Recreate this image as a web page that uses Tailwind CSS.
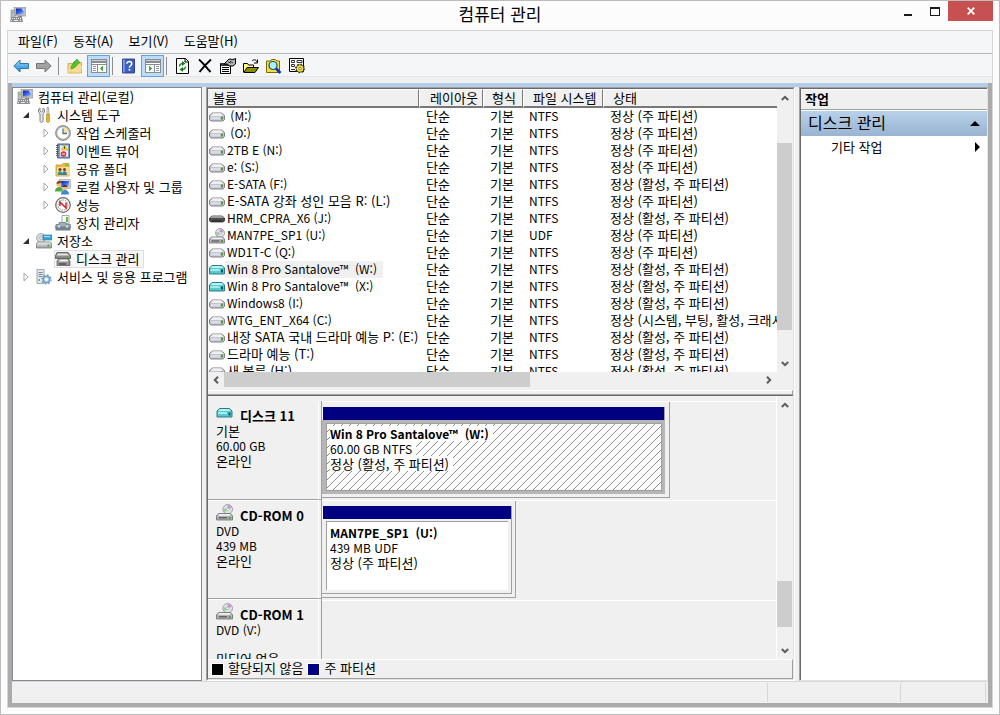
<!DOCTYPE html>
<html lang="ko">
<head>
<meta charset="utf-8">
<meta name="viewport" content="width=device-width, initial-scale=1">
<title>컴퓨터 관리</title>
<script src="https://cdn.jsdelivr.net/npm/@tailwindcss/browser@4"></script>
</head>
<body class="flex h-screen flex-col overflow-hidden border border-[#bdbdbd] bg-[#fcfcfc] px-[6px] pb-[6px] font-['Noto_Sans_CJK_KR',sans-serif] text-[13px] leading-[15px] text-black">

<svg class="absolute size-0" aria-hidden="true">
  <defs>
    <linearGradient id="gBlue" x1="0" y1="0" x2="1" y2="1"><stop offset="0" stop-color="#0a1fb0"/><stop offset=".5" stop-color="#3a62e8"/><stop offset="1" stop-color="#b8d4ff"/></linearGradient>
    <linearGradient id="gArrow" x1="0" y1="0" x2="0" y2="1"><stop offset="0" stop-color="#9fdcf8"/><stop offset="1" stop-color="#1583d6"/></linearGradient>
    <linearGradient id="gMetal" x1="0" y1="0" x2="0" y2="1"><stop offset="0" stop-color="#f4f4f4"/><stop offset="1" stop-color="#9a9aa0"/></linearGradient>
    <symbol id="computer" viewBox="0 0 16 16">
      <path d="M4 0h12v9H5z" fill="#c9c4b2" stroke="#8b8878" stroke-width=".6"/><path d="M6 1.500h8.500v6H6z" fill="url(#gBlue)"/><path d="M11.500 1.500h3v4z" fill="#c8dcff"/>
      <path d="M1 3h4v8H1z" fill="#b9bcc0" stroke="#777b80" stroke-width=".5"/><path d="M2 5h2v1H2z" fill="#5fd22e"/>
      <path d="M8 9h4v2H8z" fill="#88867c"/><path d="M1 10h11l1 5H0z" fill="#8b8f92"/><path d="M2 11h1v1H2zM4 11h1v1H4zM6 11h1v1H6zM8 11h1v1H8zM10 11h1v1h-1zM1 13h1v1H1zM4 13h4v1H4zM10 13h1v1h-1z" fill="#eceff0"/>
    </symbol>
    <symbol id="tools" viewBox="0 0 16 16">
      <path d="M4 1v3l1.500 1L7 4V1l1.500 1.500V5L7 7v7.500l-1.500 1L4 14.500V7L2.500 5V2.500z" fill="#e8e8e8" stroke="#777" stroke-width=".9"/>
      <path d="M11 .5h1.500l.5 7h-2z" fill="#e9e9e9" stroke="#777" stroke-width=".6"/><path d="M10.500 7.500h3v3h-1v1h1v3l-1 1h-1l-1-1v-3h1v-1h-1z" fill="#f5b51c" stroke="#b87d10" stroke-width=".6"/>
    </symbol>
    <symbol id="clock" viewBox="0 0 16 16"><circle cx="8" cy="8" r="7.400" fill="#b4b4b4" stroke="#777" stroke-width=".8"/><circle cx="8" cy="8" r="5.700" fill="#fffef6"/><path d="M8 8V2.400A5.600 5.600 0 0 1 13.600 8z" fill="#f8e2a2"/><path d="M8 3.500V8.500h4" fill="none" stroke="#4777ad" stroke-width="1.300"/></symbol>
    <symbol id="event" viewBox="0 0 16 16"><path d="M2.500 1h12v14h-12z" fill="#7d9ccb" stroke="#46668f"/><path d="M5 2.500h8v11H5z" fill="#e9f0fa"/><path d="M1 2h3v1H1zM1 4h3v1H1zM1 6h3v1H1zM1 8h3v1H1zM1 10h3v1H1zM1 12h3v1H1z" fill="#666"/><path d="M9.500 1.500l3.200 5.500H6.300z" fill="#ffd71e" stroke="#b99300" stroke-width=".5"/><path d="M9 3.500h1v2H9z" fill="#222"/><circle cx="8.500" cy="11" r="2.800" fill="#d8323a"/><path d="M7 10.500h3v1H7z" fill="#fff"/></symbol>
    <symbol id="share" viewBox="0 0 16 16"><path d="M1 4h6l1-1.500h6V15H1z" fill="#eab948" stroke="#bb8a24" stroke-width=".7"/><path d="M2 6h13l-1 8.500H1.500z" fill="#f9dc8a"/><path d="M10 3.500h4V5h-4z" fill="#6bc24a"/><circle cx="5" cy="8.500" r="1.500" fill="#5a4636"/><path d="M2.500 14c0-5 5-5 5 0z" fill="#2a9a90"/><circle cx="9.500" cy="8.500" r="1.500" fill="#5a4636"/><path d="M7 14c0-5 5-5 5 0z" fill="#3479bd"/></symbol>
    <symbol id="users" viewBox="0 0 16 16"><path d="M4 .5h11.500v9H5z" fill="#d9d6c8" stroke="#8d8b80" stroke-width=".5"/><path d="M6 2h8v6H6z" fill="url(#gBlue)"/><circle cx="4" cy="5" r="2.600" fill="#eebc83"/><path d="M1.500 5C1.500 1 6.500 1 6.500 4z" fill="#7b4b25"/><path d="M0 12.500c0-6 8-6 8 0z" fill="#53a83b"/><circle cx="10" cy="8.500" r="2.500" fill="#e9b78b"/><path d="M7.500 8c0-3 5-3 5 0z" fill="#4d3b2b"/><path d="M6 15.500c0-6 8-6 8 0z" fill="#4186d3"/></symbol>
    <symbol id="perf" viewBox="0 0 16 16"><circle cx="8" cy="8" r="7.300" fill="#f8f8f8" stroke="#6c6c6c" stroke-width="1.200"/><circle cx="8" cy="8" r="5" fill="#fff" stroke="#8a8a8a" stroke-width="1" stroke-dasharray="1.500 1"/><path d="M5 9V5l6 6V5.500" fill="none" stroke="#d2202a" stroke-width="1.500"/></symbol>
    <symbol id="device" viewBox="0 0 16 16"><path d="M7 .5h7v8H7z" fill="#fafafa" stroke="#888" stroke-width=".7"/><path d="M11 2h2v5h-2z" fill="#5fbd3c"/><path d="M1 9.500h3V7.500h7v2h4.500v3H.5z" fill="#9fb0bd" stroke="#62717c" stroke-width=".7"/><path d="M.5 11.500h15v4H.5z" fill="#71828e"/><path d="M3 10.500h2v2H3zM11 10.500h2v2h-2z" fill="#dfe6ea"/></symbol>
    <symbol id="storage" viewBox="0 0 16 16"><circle cx="5" cy="5" r="4.500" fill="#d4dadd" stroke="#8d979c" stroke-width=".7"/><circle cx="5" cy="5" r="1.300" fill="#fff" stroke="#888" stroke-width=".5"/><path d="M7 2h9v5H7z" fill="#39a9dc" stroke="#1f6f99" stroke-width=".6"/><path d="M8 3h6v1H8z" fill="#a9e2f8"/><path d="M1.500 9h13l1 2v4H.5v-4z" fill="url(#gMetal)" stroke="#757b80" stroke-width=".8"/><path d="M11.500 11.500h2v2h-2z" fill="#36b428"/></symbol>
    <symbol id="diskmgmt" viewBox="0 0 16 16"><path d="M2 1.500h11l2.500 3v3H.5v-3z" fill="#8a8a8a" stroke="#444" stroke-width=".7"/><path d="M3 2.500h9l2 2H1.500z" fill="#e4e4e4"/><path d="M4 7.500h9l2 2.500v4.500H2V10z" fill="#929292" stroke="#555" stroke-width=".7"/><path d="M5 8.500h7l1.500 2h-10z" fill="#f0f0f0"/><path d="M4 12.500h7v1H4z" fill="#333"/><path d="M12 5h2v1h-2z" fill="#3dbf2c"/></symbol>
    <symbol id="services" viewBox="0 0 16 16"><path d="M1 .5h7v14H1z" fill="#e2e8ec" stroke="#8996a0" stroke-width=".8"/><path d="M2.500 3h4v1h-4zM2.500 5h4v1h-4zM2.500 7h4v1h-4z" fill="#7b8994"/><path d="M2.500 10h1.500v2H2.500z" fill="#4cc437"/><circle cx="10.500" cy="10.500" r="3.200" fill="#c8def2" stroke="#6f9bc6" stroke-width="1.500"/><circle cx="10.500" cy="10.500" r="4.500" fill="none" stroke="#6f9bc6" stroke-width="1.400" stroke-dasharray="1.600 1.934"/><circle cx="10.500" cy="10.500" r="1.300" fill="#fff"/></symbol>
    <symbol id="drive" viewBox="0 0 16 10"><path d="M3.500 1h9l3 2.500v4L14 9H2L.5 7.500v-4z" fill="#c4c4cc" stroke="#77777f" stroke-width=".9"/><path d="M4 1.200h8L14.500 4h-13z" fill="#f0f0f2"/><path d="M2 5h9v2.500H2z" fill="#dcdce8"/><path d="M12 4.500h2v3h-2z" fill="#4f9d37"/></symbol>
    <symbol id="darkdrive" viewBox="0 0 16 10"><path d="M3 2h10l2.500 2v3L14 8H2L.5 7V4z" fill="#4c4c4c" stroke="#333" stroke-width=".8"/><path d="M3 2h10l2 2H1z" fill="#a0a0a0"/><path d="M3 6.500h10v1H3z" fill="#222"/></symbol>
    <symbol id="teal" viewBox="0 0 16 10"><path d="M3 .5h10L15.500 3v6H.5V3z" fill="#58c9cf" stroke="#18727c" stroke-width=".9"/><path d="M3.500 1h9l2 2h-13z" fill="#b9f3f3"/><path d="M1.500 4h9v2h-9z" fill="#a5ecec"/><path d="M12 4.500h2v3h-2z" fill="#0c5860"/></symbol>
    <symbol id="cd" viewBox="0 0 16 16"><circle cx="11" cy="5" r="4.500" fill="#dfe3e3" stroke="#8b9494" stroke-width=".8"/><path d="M11 5V1a4 4 0 0 1 3.500 2.500z" fill="#c98fd8"/><path d="M11 5L8 8a4 4 0 0 1-.8-4z" fill="#8fd59b"/><circle cx="11" cy="5" r="1.300" fill="#fff" stroke="#888" stroke-width=".5"/><path d="M2.500 9h11l2 2v4H.5v-4z" fill="#b5b5bb" stroke="#6b6b70" stroke-width=".8"/><path d="M3 9.500h10l1 1.500H2z" fill="#f1f1f1"/><path d="M2.500 12.500h8v1h-8z" fill="#444"/><path d="M12 12h2v2h-2z" fill="#41a72c"/></symbol>
    <symbol id="closed" viewBox="0 0 6 10"><path d="M1 1l4 4-4 4z" fill="#fff" stroke="#a6a6a6"/></symbol>
    <symbol id="open" viewBox="0 0 6 6"><path d="M6 0v6H0z" fill="#303030"/></symbol>
    <symbol id="up" viewBox="0 0 8 6"><path d="M.8 5L4 1.800 7.200 5" fill="none" stroke="#5c5c5c" stroke-width="2"/></symbol>
    <symbol id="down" viewBox="0 0 8 6"><path d="M.8 1L4 4.200 7.200 1" fill="none" stroke="#5c5c5c" stroke-width="2"/></symbol>
  </defs>
</svg>

<header class="relative flex h-[29px] shrink-0 items-start">
  <svg class="mt-[6px] ml-[3px] size-4"><use href="#computer"/></svg>
  <h1 class="absolute inset-x-0 top-[3px] text-center text-[17px] leading-5">컴퓨터 관리</h1>
  <div class="z-10 ml-auto flex">
    <button class="flex h-5 w-7 items-center justify-center" aria-label="최소화"><svg class="h-4 w-3" viewBox="0 0 12 16"><path d="M2 11h8v2H2z" fill="#1a1a1a"/></svg></button>
    <button class="flex h-5 w-[26px] items-center justify-center" aria-label="최대화"><svg class="h-4 w-3" viewBox="0 0 12 16" shape-rendering="crispEdges"><path d="M1 4h10v9H1zM2 6v6h8V6z" fill="#1a1a1a" fill-rule="evenodd"/></svg></button>
    <button class="flex h-5 w-[45px] items-center justify-center bg-[#c75050]" aria-label="닫기"><svg class="size-2" viewBox="0 0 8 8"><path d="M.7.700l6.600 6.600M7.300.700L.7 7.300" stroke="#fff" stroke-width="1.800"/></svg></button>
  </div>
</header>

<div class="flex min-h-0 flex-1 flex-col border border-[#d5d5d5] bg-[#f0f0f0]">
  <nav class="flex h-[23px] shrink-0 items-center gap-[15px] border-b border-[#b2b6b6] bg-[#f5f6f7] pb-[3px] pl-[10px]">
    <button>파일(F)</button><button>동작(A)</button><button>보기(V)</button><button>도움말(H)</button>
  </nav>

  <div class="flex h-[23px] shrink-0 items-center border-b border-[#e4e5e6] bg-[#f5f6f7] pt-px pl-[5px]" role="toolbar">
    <button aria-label="뒤로"><svg class="h-[14px] w-4" viewBox="0 0 16 14"><path d="M.8 7L7 1v3.500h8.500v5H7V13z" fill="url(#gArrow)" stroke="#2b78b4"/></svg></button>
    <button class="ml-[7px]" aria-label="앞으로"><svg class="h-[14px] w-4" viewBox="0 0 16 14"><path d="M15.200 7L9 1v3.500H.5v5H9V13z" fill="#a2a2a2" stroke="#767676"/></svg></button>
    <span class="ml-[6px] h-[18px] w-px bg-[#8d8d8d]"></span>
    <button class="ml-2" aria-label="한 수준 위로"><svg class="size-4" viewBox="0 0 16 16"><path d="M1 5.500h5l1-1h7.500V15H1z" fill="#f3d582" stroke="#c6a040" stroke-width=".8"/><path d="M1 14.500L2 8h13l-1 6.500z" fill="#f6dc92"/><path d="M4 11c0-3 1-5 3.500-6H6l4-4 3 4h-2C10 8 8 10 4 11z" fill="#54c530" stroke="#2e8e1c" stroke-width=".6"/></svg></button>
    <button class="ml-1 flex h-[22px] w-[23px] items-center justify-center border border-[#62a2dd] bg-[#bfdcf6]" aria-label="콘솔 트리 표시"><svg class="h-[14px] w-4" viewBox="0 0 16 14" shape-rendering="crispEdges"><path d="M0 0h16v14H0z" fill="#878d93"/><path d="M1 1h14v1H1z" fill="#c9cdd1"/><path d="M1 4h14v1H1zM1 6h5v7H1zM7 6h8v7H7z" fill="#fff"/><path d="M2 7h3v1H2zM2 9h3v1H2zM2 11h3v1H2z" fill="#8e9499"/><path d="M12 7v5L9 9.500z" fill="#3fae2a"/></svg></button>
    <span class="ml-[2px] h-[18px] w-px bg-[#8d8d8d]"></span>
    <button class="ml-[9px]" aria-label="도움말"><svg class="h-4 w-[13px]" viewBox="0 0 14 16"><path d="M.5.500h13v15H.5z" fill="#3c5fc4" stroke="#26397d"/><path d="M1 1h2v14H1z" fill="#7f9ae8"/><path d="M5.200 5.700c0-3.300 5.300-3.200 5.300 0 0 2-2.600 2-2.600 4.300M7 12h2" fill="none" stroke="#fff" stroke-width="1.600"/></svg></button>
    <button class="ml-[6px] flex h-[22px] w-[23px] items-center justify-center border border-[#62a2dd] bg-[#bfdcf6]" aria-label="작업 창 표시"><svg class="h-[14px] w-4" viewBox="0 0 16 14" shape-rendering="crispEdges"><path d="M0 0h16v14H0z" fill="#878d93"/><path d="M1 1h14v1H1z" fill="#c9cdd1"/><path d="M1 4h14v1H1zM1 6h8v7H1zM10 6h5v7h-5z" fill="#fff"/><path d="M11 7h3v1h-3zM11 9h3v1h-3zM11 11h3v1h-3z" fill="#8e9499"/><path d="M4 7v5l3-2.500z" fill="#3fae2a"/></svg></button>
    <span class="ml-[2px] h-[18px] w-px bg-[#8d8d8d]"></span>
    <button class="ml-[9px]" aria-label="새로 고침"><svg class="h-4 w-[13px]" viewBox="0 0 13 16"><path d="M.5.500h9l3 3v12H.5z" fill="#fff" stroke="#000"/><path d="M9 .5v3.500h3.500" fill="none" stroke="#000"/><path d="M3.500 8.500c0-3 2.500-3 4-3" fill="none" stroke="#168016" stroke-width="1.300"/><path d="M6 3l3.500 2.500L6 8z" fill="#168016"/><path d="M9.500 8.500c0 3-2.500 3-4 3" fill="none" stroke="#168016" stroke-width="1.300"/><path d="M7 9l-3.500 2.500L7 14z" fill="#168016"/></svg></button>
    <button class="ml-[9px]" aria-label="삭제"><svg class="h-[15px] w-[14px]" viewBox="0 0 14 15"><path d="M1 1.500C5 5 9 10 12.500 14M13 1.500C9 5 5 9.500 1.500 14" fill="none" stroke="#000" stroke-width="2"/></svg></button>
    <button class="ml-[8px]" aria-label="속성"><svg class="size-4" viewBox="0 0 16 16"><path d="M.5 5.500h10v10H.5z" fill="#fff" stroke="#000"/><path d="M1 5h9v3H1z" fill="#333"/><path d="M2 9.500h7M2 11.500h7M2 13.500h7" stroke="#000"/><path d="M4 6l5-5 4 .5 2.500-1V6L13 8H9L7.500 6z" fill="#b5b5b5" stroke="#000"/><path d="M8 4l3 1M10 3l3 2" stroke="#000" stroke-width=".7"/></svg></button>
    <button class="ml-[7px]" aria-label="열기"><svg class="size-4" viewBox="0 0 16 16"><path d="M.5 14V5.500h4l1 1.500h5v3" fill="#ffff8a" stroke="#000"/><path d="M.8 14.500L4 9.500h11.500l-3.500 5z" fill="#8b8b00" stroke="#000"/><path d="M9 3c2-2 4-1.500 5 1M14.500 1.500V5H11" fill="none" stroke="#000"/></svg></button>
    <button class="ml-[7px]" aria-label="찾기"><svg class="size-4" viewBox="0 0 16 16"><path d="M.5 3h4l1-1.500h4L11 3h2.500v11.500H.5z" fill="#f5e13e" stroke="#766a00"/><circle cx="7" cy="7.500" r="4" fill="#a7f2f8" stroke="#26457c" stroke-width="1.200"/><path d="M10 10.500l4.500 4.500" stroke="#0c2fc8" stroke-width="2.500"/></svg></button>
    <button class="ml-[7px]" aria-label="설정"><svg class="size-4" viewBox="0 0 16 16"><path d="M.5.500h14v13H.5z" fill="#fff" stroke="#000"/><path d="M2.500 2.500h3v2h-3zM2.500 6.500h3v2h-3zM8 2.500h5v2H8z" fill="none" stroke="#333"/><path d="M2 11h4v1H2z" fill="#333"/><circle cx="11" cy="10.500" r="3.800" fill="#ffe92d" stroke="#333" stroke-width=".8"/><circle cx="11" cy="10.500" r="4.300" fill="none" stroke="#3d3500" stroke-width="1.300" stroke-dasharray="1.500 1.877"/><circle cx="11" cy="10.500" r="1.300" fill="#fff" stroke="#333" stroke-width=".6"/></svg></button>
  </div>

  <div class="mt-[6px] flex min-h-0 flex-1 flex-col border-x-4 border-b-4 border-[#ababab]">
    <div class="h-1 shrink-0 bg-[#b4cde8]"></div>
    <main class="flex min-h-0 flex-1 gap-1">

      <ul class="flex w-[190px] shrink-0 flex-col overflow-hidden border border-[#828790] bg-white leading-[18px]">
        <li class="flex h-[18px] items-center pl-1"><svg class="size-4"><use href="#computer"/></svg><span class="pl-[5px]">컴퓨터 관리(로컬)</span></li>
        <li class="flex h-[18px] items-center pl-[10px]"><svg class="mr-[7px] size-[6px]"><use href="#open"/></svg><svg class="size-4"><use href="#tools"/></svg><span class="pl-[5px]">시스템 도구</span></li>
        <li class="flex h-[18px] items-center pl-[30px]"><svg class="mr-[6px] h-[10px] w-[6px]"><use href="#closed"/></svg><svg class="size-4"><use href="#clock"/></svg><span class="pl-[5px]">작업 스케줄러</span></li>
        <li class="flex h-[18px] items-center pl-[30px]"><svg class="mr-[6px] h-[10px] w-[6px]"><use href="#closed"/></svg><svg class="size-4"><use href="#event"/></svg><span class="pl-[5px]">이벤트 뷰어</span></li>
        <li class="flex h-[18px] items-center pl-[30px]"><svg class="mr-[6px] h-[10px] w-[6px]"><use href="#closed"/></svg><svg class="size-4"><use href="#share"/></svg><span class="pl-[5px]">공유 폴더</span></li>
        <li class="flex h-[18px] items-center pl-[30px]"><svg class="mr-[6px] h-[10px] w-[6px]"><use href="#closed"/></svg><svg class="size-4"><use href="#users"/></svg><span class="pl-[5px] whitespace-nowrap">로컬 사용자 및 그룹</span></li>
        <li class="flex h-[18px] items-center pl-[30px]"><svg class="mr-[6px] h-[10px] w-[6px]"><use href="#closed"/></svg><svg class="size-4"><use href="#perf"/></svg><span class="pl-[5px]">성능</span></li>
        <li class="flex h-[18px] items-center pl-[42px]"><svg class="size-4"><use href="#device"/></svg><span class="pl-[5px]">장치 관리자</span></li>
        <li class="flex h-[18px] items-center pl-[10px]"><svg class="mr-[7px] size-[6px]"><use href="#open"/></svg><svg class="size-4"><use href="#storage"/></svg><span class="pl-[5px]">저장소</span></li>
        <li class="flex h-[18px] items-center pl-[41px]"><span class="flex h-[18px] items-center border border-[#dedede] bg-[#f7f7f7] pr-1"><svg class="size-4"><use href="#diskmgmt"/></svg><span class="pl-[5px]">디스크 관리</span></span></li>
        <li class="flex h-[18px] items-center pl-[10px]"><svg class="mr-[7px] h-[10px] w-[6px]"><use href="#closed"/></svg><svg class="size-4"><use href="#services"/></svg><span class="pl-[5px] whitespace-nowrap">서비스 및 응용 프로그램</span></li>
      </ul>

      <section class="flex min-w-0 flex-1 flex-col border border-[#a0a0a0] border-r-white border-b-white">
        <div class="flex min-h-0 flex-1 flex-col border border-[#696969] border-r-[#e3e3e3] border-b-[#e3e3e3]">
          <div class="flex h-[283px] shrink-0">
            <div class="min-w-0 flex-1 overflow-hidden bg-white">
              <table class="w-full table-fixed border-separate border-spacing-0 leading-[15px] whitespace-nowrap">
                <colgroup><col class="w-[211px]"><col class="w-[64px]"><col class="w-[40px]"><col class="w-[80px]"><col></colgroup>
                <thead>
                  <tr class="bg-[#f0f0f0] text-left">
                    <th class="h-[19px] border-t border-r border-b-2 border-[#787878] border-t-white p-0 pl-[5px] font-normal leading-4">볼륨</th>
                    <th class="h-[19px] border-t border-r border-b-2 border-l border-[#787878] border-t-white border-l-white p-0 pl-[10px] font-normal leading-4">레이아웃</th>
                    <th class="h-[19px] border-t border-r border-b-2 border-l border-[#787878] border-t-white border-l-white p-0 pl-2 font-normal leading-4">형식</th>
                    <th class="h-[19px] border-t border-r border-b-2 border-l border-[#787878] border-t-white border-l-white p-0 pl-[9px] font-normal leading-4">파일 시스템</th>
                    <th class="h-[19px] border-t border-b-2 border-l border-[#787878] border-t-white border-l-white p-0 pl-[9px] font-normal leading-4">상태</th>
                  </tr>
                </thead>
                <tbody id="volumes"></tbody>
              </table>
            </div>
            <div class="flex w-4 shrink-0 flex-col items-start">
              <button class="flex h-[17px] w-[15px] items-center justify-center" aria-label="위로"><svg class="h-[6px] w-2"><use href="#up"/></svg></button>
              <div class="flex w-[15px] flex-1 flex-col pt-[37px] pb-[25px]"><div class="flex-1 bg-[#cdcdcd]"></div></div>
              <button class="flex h-[17px] w-[15px] items-center justify-center" aria-label="아래로"><svg class="h-[6px] w-2"><use href="#down"/></svg></button>
            </div>
          </div>
          <div class="flex h-[15px] shrink-0 pr-4">
            <button class="flex w-4 items-center justify-center" aria-label="왼쪽"><svg class="h-2 w-[6px]" viewBox="0 0 6 8"><path d="M5 .8L1.800 4 5 7.200" fill="none" stroke="#5c5c5c" stroke-width="2"/></svg></button>
            <div class="flex flex-1"><div class="w-[57%] bg-[#cdcdcd]"></div></div>
            <button class="flex w-[17px] items-center justify-center" aria-label="오른쪽"><svg class="h-2 w-[6px]" viewBox="0 0 6 8"><path d="M1 .8L4.200 4 1 7.200" fill="none" stroke="#5c5c5c" stroke-width="2"/></svg></button>
          </div>
          <div class="flex h-[9px] shrink-0 flex-col border-b border-[#696969] pt-[3px]"><div class="flex-1 border-t border-r border-b border-[#a0a0a0] border-t-white"></div></div>

          <div class="flex min-h-0 flex-1">
            <div class="min-w-0 flex-1 overflow-hidden border-r border-white pt-[5px]">
              <div class="flex h-[99px]">
                <div class="w-[111px] shrink-0 border-r border-b border-r-white border-b-[#a0a0a0] pt-[7px] pl-2">
                  <h2 class="flex items-start gap-[7px] font-bold"><svg class="h-[10px] w-[17px]"><use href="#teal"/></svg>디스크 11</h2>
                  <p>기본</p><p class="text-xs leading-[15px]">60.00 GB</p><p>온라인</p>
                </div>
                <div class="w-[3px] shrink-0 border-r border-b border-[#a0a0a0]"></div>
                <div class="min-w-0 flex-1 border-t border-white">
                  <div class="flex h-[96px] w-[348px] flex-col border-r border-b border-[#a0a0a0] pt-[5px] pr-1 pb-[3px]">
                    <div class="h-[13px] border-r border-l border-r-[#a0a0a0] border-l-white bg-[#000080]"></div>
                    <div class="flex flex-1 border-y-[3px] border-r-[3px] border-l-4 border-[#b6b6b6]">
                      <div class="relative flex-1 border border-[#a0a0a0] bg-white">
                        <svg class="absolute inset-0 size-full"><defs><pattern id="hatch" width="8" height="8" patternUnits="userSpaceOnUse"><path d="M0 7h1v1H0zM1 6h1v1H1zM2 5h1v1H2zM3 4h1v1H3zM4 3h1v1H4zM5 2h1v1H5zM6 1h1v1H6zM7 0h1v1H7z" fill="#8c8c8c" shape-rendering="crispEdges"/></pattern></defs><rect width="100%" height="100%" fill="url(#hatch)"/></svg>
                        <div class="relative flex flex-col items-start pt-[2px] pl-[3px] whitespace-pre"><b class="bg-white pr-1 text-xs leading-[15px]">Win 8 Pro Santalove™  (W:)</b><span class="bg-white pr-1 text-xs leading-[15px]">60.00 GB NTFS</span><span class="bg-white pr-1">정상 (활성, 주 파티션)</span></div>
                      </div>
                    </div>
                  </div>
                </div>
              </div>
              <div class="flex h-[99px]">
                <div class="w-[111px] shrink-0 border-t border-r border-b border-white border-b-[#a0a0a0] pt-[7px] pl-2">
                  <h2 class="flex items-start gap-[7px] font-bold"><svg class="-mt-1 size-[17px]"><use href="#cd"/></svg>CD-ROM 0</h2>
                  <p class="text-xs leading-[15px]">DVD</p><p class="text-xs leading-[15px]">439 MB</p><p>온라인</p>
                </div>
                <div class="w-[3px] shrink-0 border-r border-b border-[#a0a0a0]"></div>
                <div class="min-w-0 flex-1 border-t border-white">
                  <div class="flex h-[97px] w-[194px] flex-col border-r border-b border-[#a0a0a0] pt-[5px] pr-[3px] pb-[3px]">
                    <div class="h-[13px] border-r border-l border-r-[#a0a0a0] border-l-white bg-[#000080]"></div>
                    <div class="flex flex-1 border-r border-b border-[#a0a0a0] pt-[2px] pr-[3px] pb-[3px] pl-1">
                      <div class="flex-1 border-t border-l border-[#a0a0a0] bg-white"><div class="flex flex-col pt-[3px] pl-[3px] whitespace-pre"><b class="text-xs leading-[15px]">MAN7PE_SP1  (U:)</b><span class="text-xs leading-[15px]">439 MB UDF</span><span>정상 (주 파티션)</span></div></div>
                    </div>
                  </div>
                </div>
              </div>
              <div class="flex h-[99px]">
                <div class="w-[111px] shrink-0 border-t border-r border-b border-white border-b-[#a0a0a0] pt-[7px] pl-2">
                  <h2 class="flex items-start gap-[7px] font-bold"><svg class="-mt-1 size-[17px]"><use href="#cd"/></svg>CD-ROM 1</h2>
                  <p class="text-xs leading-[15px]">DVD (V:)</p><p class="pt-[14px]">미디어 없음</p>
                </div>
                <div class="w-[3px] shrink-0 border-r border-[#a0a0a0]"></div>
                <div class="min-w-0 flex-1 pt-px"><div class="h-px bg-white"></div></div>
              </div>
            </div>
            <div class="flex w-4 shrink-0 flex-col items-start">
              <button class="flex h-[17px] w-[15px] items-center justify-center" aria-label="위로"><svg class="h-[6px] w-2"><use href="#up"/></svg></button>
              <div class="flex w-[15px] flex-1 flex-col justify-end pb-[15px]"><div class="h-[46px] bg-[#cdcdcd]"></div></div>
              <button class="flex h-[17px] w-[15px] items-center justify-center" aria-label="아래로"><svg class="h-[6px] w-2"><use href="#down"/></svg></button>
            </div>
          </div>
          <div class="flex h-5 shrink-0 items-center border-t border-r border-b border-[#a0a0a0] border-t-white pl-[3px]">
            <span class="size-[13px] border border-white bg-black"></span><span class="pb-[3px] pl-1">할당되지 않음</span>
            <span class="ml-1 size-[13px] border border-white bg-[#000080]"></span><span class="pb-[3px] pl-1">주 파티션</span>
          </div>
        </div>
      </section>

      <aside class="flex w-[189px] shrink-0 flex-col border border-[#a0a0a0] border-r-[#e3e3e3] border-b-[#e3e3e3]">
        <div class="flex-1 border-t border-l border-[#696969] bg-white">
          <h2 class="flex h-[21px] items-center border-t border-b border-t-white border-b-[#a0a0a0] bg-[#f0f0f0] pb-[2px] pl-1 font-bold">작업</h2>
          <button class="mt-px flex h-[25px] w-full items-center justify-between bg-linear-to-b from-[#b9d1ea] to-[#99b4d1] px-[7px] text-[16px]"><span class="pb-[2px]">디스크 관리</span><svg class="h-[5px] w-[10px]" viewBox="0 0 10 5"><path d="M5 0l5 5H0z"/></svg></button>
          <button class="flex h-[22px] w-full items-center justify-between pr-[7px] pl-[30px]"><span class="pb-px">기타 작업</span><svg class="h-[10px] w-[5px]" viewBox="0 0 5 10"><path d="M0 0l5 5-5 5z"/></svg></button>
        </div>
      </aside>
    </main>
    <footer class="flex h-[22px] shrink-0 border-t border-[#d7d7d7] py-px pr-[2px]">
      <div class="flex-1 border-r border-[#d7d7d7]"></div><div class="w-[133px] border-r border-[#d7d7d7]"></div><div class="w-[85px] border-r border-[#d7d7d7]"></div>
    </footer>
  </div>
</div>

<script>
  const primary = '정상 (주 파티션)';
  const active = '정상 (활성, 주 파티션)';
  const volumes = [
    ['drive', '\u00a0(M:)', 'NTFS', primary],
    ['drive', '\u00a0(O:)', 'NTFS', primary],
    ['drive', '2TB E (N:)', 'NTFS', primary],
    ['drive', 'e: (S:)', 'NTFS', primary],
    ['drive', 'E-SATA (F:)', 'NTFS', active],
    ['drive', 'E-SATA 강좌 성인 모음 R: (L:)', 'NTFS', primary],
    ['darkdrive', 'HRM_CPRA_X6 (J:)', 'NTFS', active],
    ['cd', 'MAN7PE_SP1 (U:)', 'UDF', primary],
    ['drive', 'WD1T-C (Q:)', 'NTFS', primary],
    ['teal', 'Win 8 Pro Santalove™\u00a0 (W:)', 'NTFS', active],
    ['teal', 'Win 8 Pro Santalove™\u00a0 (X:)', 'NTFS', active],
    ['drive', 'Windows8 (I:)', 'NTFS', active],
    ['drive', 'WTG_ENT_X64 (C:)', 'NTFS', '정상 (시스템, 부팅, 활성, 크래시 덤프, 주 파티션)'],
    ['drive', '내장 SATA 국내 드라마 예능 P: (E:)', 'NTFS', active],
    ['drive', '드라마 예능 (T:)', 'NTFS', active],
    ['drive', '새 볼륨 (H:)', 'NTFS', active],
  ];
  const hangul = /[가-힣]/;
  document.getElementById('volumes').innerHTML = volumes.map(([icon, name, fs, status], i) => `
    <tr>
      <td class="h-[17px] p-0 pl-px"><div class="flex h-[17px]"><svg class="${icon === 'cd' ? 'size-4 shrink-0 self-center' : 'h-[10px] w-4 shrink-0 self-center'}"><use href="#${icon}"/></svg><span class="pb-[2px] pl-[2px] ${hangul.test(name) ? '' : 'text-xs leading-[15px]'} ${i === 9 ? 'bg-[#f0f0f0] pr-[6px]' : ''}">${name}</span></div></td>
      <td class="h-[17px] p-0 pl-[7px] align-top">단순</td>
      <td class="h-[17px] p-0 pl-[7px] align-top">기본</td>
      <td class="h-[17px] p-0 pl-[6px] align-top text-xs leading-[15px]">${fs}</td>
      <td class="h-[17px] overflow-hidden p-0 pl-[7px] align-top">${status}</td>
    </tr>`).join('');
</script>
</body>
</html>
